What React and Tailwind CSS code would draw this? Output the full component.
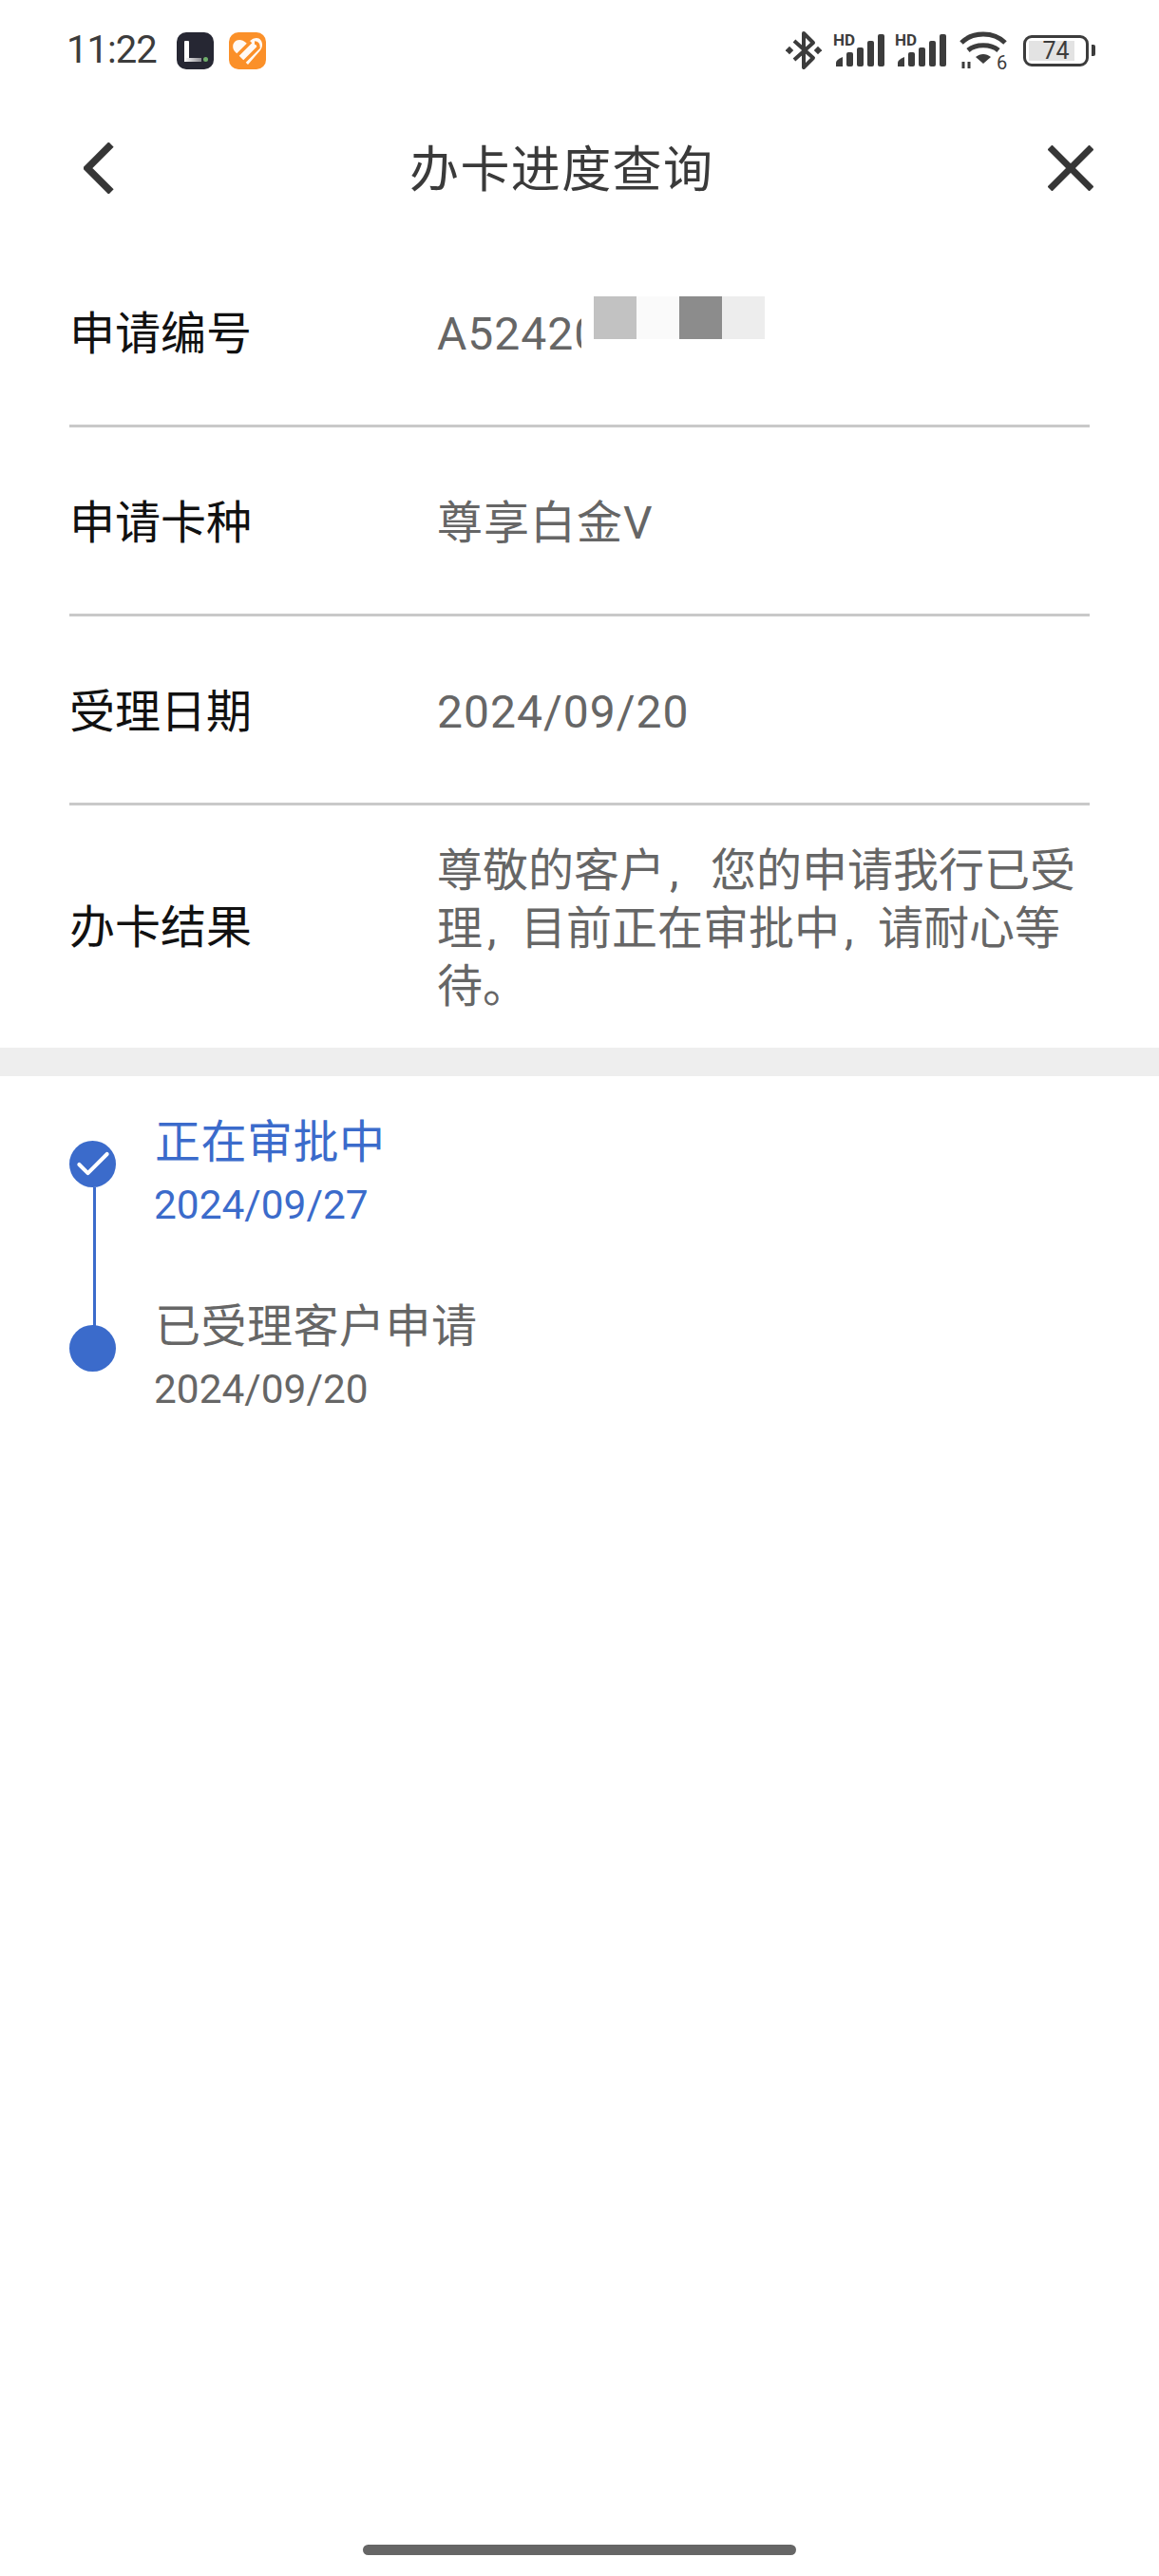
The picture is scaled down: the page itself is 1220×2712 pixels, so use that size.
import React from 'react'
import { Check } from 'lucide-react'

const rows = [
  { label: '申请编号', value: 'A52420', masked: true },
  { label: '申请卡种', value: '尊享白金V' },
  { label: '受理日期', value: '2024/09/20' },
]

const font = "font-['Roboto','Noto_Sans_CJK_SC',sans-serif]"

const Signal = () => (
  <svg className="-mt-[5px]" width="54" height="41" viewBox="0 -5 54 41" fill="#3c3c3c">
    <text x="0" y="13" fontSize="17" fontWeight="700" fontFamily="Roboto">HD</text>
    <path d="M3 35 V31 Q3 28 10 25 V35 Z" />
    <rect x="14" y="20" width="7" height="15" rx="2" />
    <rect x="25" y="15" width="7" height="20" rx="2" />
    <rect x="36" y="8" width="7" height="27" rx="2" />
    <rect x="47" y="1" width="7" height="34" rx="2" />
  </svg>
)

const StatusBar = () => (
  <div className="flex h-[106px] items-center pl-[70px] text-[#3c3c3c]">
    <span className="w-[116px] text-[40px] leading-none tracking-[-1px]">11:22</span>
    <div className="relative h-[39px] w-[39px] rounded-[10px] bg-[#262733]">
      <div className="absolute left-[8px] top-[9px] h-[22px] w-[5px] rounded-t-[1px] bg-white"></div>
      <div className="absolute left-[8px] top-[27px] h-[4px] w-[18px] rounded-bl-[3px] bg-gradient-to-r from-white to-[#8a8a90]"></div>
      <div className="absolute left-[28px] top-[26px] h-[5px] w-[5px] rounded-full bg-[#6fae6b]"></div>
    </div>
    <div className="ml-[16px] h-[39px] w-[39px] rounded-[10px] bg-[#fb9029]">
      <svg width="39" height="39" viewBox="0 0 39 39">
        <path d="M20 34 L6 20 C2 15 5 8 11 8 C14 8 17 10 19 12 C22 9 25 6 29 6 C35 6 37 14 33 19 Z" fill="#fff" fillOpacity="0.95" />
        <path d="M9 24 L23 10 M16 31 L31 16 Q31 11 27 11" fill="none" stroke="#fb9029" strokeWidth="3.5" />
      </svg>
    </div>
    <svg className="ml-[547px]" width="38" height="42" viewBox="0 0 38 42" fill="none" stroke="#3c3c3c" strokeWidth="4" strokeLinejoin="round">
      <path d="M9 11 L29 29 L19 39 L19 3 L29 13 L9 31" />
      <rect x="1" y="18" width="6" height="6" transform="rotate(45 4 21)" fill="#3c3c3c" stroke="none" />
      <rect x="31" y="18" width="6" height="6" transform="rotate(45 34 21)" fill="#3c3c3c" stroke="none" />
    </svg>
    <div className="ml-[12px] flex gap-[11px]">
      <Signal />
      <Signal />
    </div>
    <svg className="-mb-[6px] ml-[14px]" width="54" height="48" viewBox="0 0 54 48" fill="none" stroke="#3c3c3c" strokeWidth="5">
      <path d="M2 13 C14 1 36 1 48 13" />
      <path d="M9 21 C17 14 33 14 41 21" />
      <path d="M17 28 L25 35 L33 28 C28 24 22 24 17 28 Z" fill="#3c3c3c" stroke="none" />
      <text x="39" y="41" fontSize="20" fontFamily="Roboto" fill="#3c3c3c" stroke="none">6</text>
      <path d="M4 33 V40 M10 33 V40" strokeWidth="3" />
    </svg>
    <div className="ml-[13px] flex items-center">
      <div className="relative flex h-[33px] w-[69px] items-center justify-center overflow-hidden rounded-[9px] border-[3px] border-[#3c3c3c]">
        <div className="absolute inset-y-[3px] left-[3px] w-[48px] bg-[#e3e3e3]"></div>
        <span className="relative text-[25px] leading-none">74</span>
      </div>
      <div className="ml-[3px] h-[12px] w-[4px] rounded-r-[2px] bg-[#3c3c3c]"></div>
    </div>
  </div>
)

// the comma sits tight against the previous character, with a narrower advance on line two
const Comma = ({ wide }) => (
  <span className={wide ? 'inline-block w-[48px] pl-[5px]' : 'inline-block w-[40px] pl-[5px]'}>,</span>
)

export default function App() {
  return (
    <div className={`relative flex h-[2712px] flex-col bg-white ${font}`}>
      <StatusBar />

      {/* Header */}
      <div className="flex h-[145px] items-center pb-[3px] pl-[88px]">
        <svg width="32" height="54" viewBox="0 0 32 54" fill="none" stroke="#363636" strokeWidth="7.5">
          <path d="M29 2 L4 27 L29 52" />
        </svg>
        <div className="ml-[311px] mt-[6px] w-[552px] text-[52px] leading-none tracking-[1.4px] text-[#3a3a3a]">办卡进度查询</div>
        <svg className="ml-[120px]" width="48" height="48" viewBox="0 0 48 48" fill="none" stroke="#363636" strokeWidth="7">
          <path d="M2 2 L46 46 M46 2 L2 46" />
        </svg>
      </div>

      {/* Info rows */}
      <div className="px-[73px]">
        {rows.map(row => (
          <div key={row.label} className="flex h-[199px] items-center border-b-[3px] border-[#c9c9c9] pt-[6px]">
            <div className="w-[387px] text-[48px] leading-none text-[#111]">{row.label}</div>
            {row.masked ? (
              <>
                <div className="w-[152px] overflow-hidden whitespace-nowrap text-[48px] leading-none tracking-[1px] text-[#666]">{row.value}</div>
                <div className="-mt-[36px] ml-[13px] flex h-[45px]">
                  <div className="w-[45px] bg-[#c2c2c2]"></div>
                  <div className="w-[45px] bg-[#fafafa]"></div>
                  <div className="w-[45px] bg-[#8c8c8c]"></div>
                  <div className="w-[45px] bg-[#ededed]"></div>
                </div>
              </>
            ) : (
              <div className="text-[48px] leading-none tracking-[1px] text-[#666]">{row.value}</div>
            )}
          </div>
        ))}
        <div className="flex h-[255px] items-center pt-[3px]">
          <div className="w-[387px] text-[48px] leading-none text-[#111]">办卡结果</div>
          <div className="flex-1 text-[48px] leading-[61px] text-[#666]">
            尊敬的客户<Comma wide />您的申请我行已受理<Comma />目前正在审批中<Comma />请耐心等待。
          </div>
        </div>
      </div>

      {/* Divider band */}
      <div className="h-[30px] bg-[#eeeeee]"></div>

      {/* Timeline */}
      <div className="px-[73px] pt-[42px]">
        <div className="flex h-[194px]">
          <div className="relative w-[90px]">
            <div className="mt-[26px] flex h-[49px] w-[49px] items-center justify-center rounded-full bg-[#3b6bcb]">
              <Check size={44} strokeWidth={2.2} color="#fff" className="shrink-0" />
            </div>
            <div className="absolute left-[25px] top-[75px] h-[146px] w-[3px] bg-[#3b6bcb]"></div>
          </div>
          <div className="pt-[4px] text-[#3b6bcb]">
            <div className="text-[48px] leading-none tracking-[0.5px]">正在审批中</div>
            <div className="-ml-[1px] mt-[21px] text-[42.4px] leading-none">2024/09/27</div>
          </div>
        </div>
        <div className="flex">
          <div className="w-[90px]">
            <div className="mt-[26px] h-[49px] w-[49px] rounded-full bg-[#3b6bcb]"></div>
          </div>
          <div className="pt-[4px] text-[#666]">
            <div className="text-[48px] leading-none tracking-[0.5px]">已受理客户申请</div>
            <div className="-ml-[1px] mt-[21px] text-[42.4px] leading-none">2024/09/20</div>
          </div>
        </div>
      </div>

      {/* Home indicator */}
      <div className="absolute bottom-[22px] left-[382px] h-[11px] w-[456px] rounded-full bg-[#666]"></div>
    </div>
  )
}
